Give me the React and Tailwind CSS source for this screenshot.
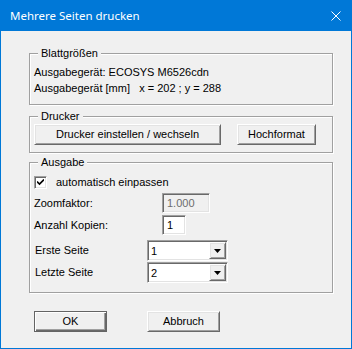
import React from "react";

const raised =
  "border border-t-white border-l-white border-r-[#696969] border-b-[#696969] shadow-[inset_1px_1px_0_#e3e3e3,inset_-1px_-1px_0_#a0a0a0] bg-[#f0f0f0]";
const sunken =
  "border border-t-[#a0a0a0] border-l-[#a0a0a0] border-r-white border-b-white shadow-[inset_1px_1px_0_#696969,inset_-1px_-1px_0_#e3e3e3]";

function Group({ title, className, children }) {
  return (
    <div
      className={
        "relative border border-[#a0a0a0] shadow-[inset_1px_1px_0_#fff,1px_1px_0_#fff] " +
        className
      }
    >
      <span className="absolute left-[8px] top-[-8px] bg-[#f0f0f0] px-[3px] leading-[14px]">
        {title}
      </span>
      {children}
    </div>
  );
}

function Btn({ children, className, def }) {
  return (
    <div
      className={
        "flex items-center justify-center h-[21px] " +
        (def
          ? "border border-[#646464] shadow-[inset_1px_1px_0_#fff,inset_-1px_-1px_0_#696969,inset_-2px_-2px_0_#a0a0a0] bg-[#f0f0f0] "
          : raised + " ") +
        className
      }
    >
      {children}
    </div>
  );
}

function Combo({ value }) {
  return (
    <div className={sunken + " bg-white w-[81px] h-[21px] flex items-center"}>
      <span className="pl-[3px] flex-1 leading-[14px]">{value}</span>
      <div className={raised + " w-[17px] h-[17px] mr-[1px] flex items-center justify-center"}>
        <svg width="7" height="4" viewBox="0 0 7 4">
          <path d="M0 0h7L3.5 4z" fill="#000" />
        </svg>
      </div>
    </div>
  );
}

export default function App() {
  return (
    <div
      className="w-[352px] h-[349px] bg-[#0078d7] px-[1px] pb-[1px] flex flex-col text-[11px] text-black"
      style={{ fontFamily: '"Liberation Sans", Arial, sans-serif' }}
    >
      <div className="h-[31px] flex items-center justify-between pl-[9px] pr-[10px] text-white">
        <span
          className="text-[11.5px]"
          style={{ fontFamily: '"Noto Sans", "Open Sans", sans-serif' }}
        >
          Mehrere Seiten drucken
        </span>
        <svg width="10" height="10" viewBox="0 0 10 10">
          <path d="M0.5 0.5L9.5 9.5M9.5 0.5L0.5 9.5" stroke="#fff" strokeWidth="1" />
        </svg>
      </div>
      <div className="flex-1 bg-[#f0f0f0] pl-[28px] pr-[18px] pt-[22px] flex flex-col">
        <Group title="Blattgrößen" className="h-[52px] pl-[4px] pt-[10px]">
          <div className="leading-[16px]">Ausgabegerät: ECOSYS M6526cdn</div>
          <div className="leading-[16px] whitespace-pre">
            {"Ausgabegerät [mm]   x = 202 ; y = 288"}
          </div>
        </Group>
        <Group title="Drucker" className="mt-[11px] h-[37px] pl-[4px] pt-[7px] flex">
          <Btn className="w-[187px]">Drucker einstellen / wechseln</Btn>
          <Btn className="w-[79px] ml-[16px]">Hochformat</Btn>
        </Group>
        <Group title="Ausgabe" className="mt-[9px] h-[131px] pl-[4px] pt-[13px] flex flex-col">
          <div className="flex items-center h-[13px]">
            <div className={sunken + " bg-white w-[13px] h-[13px] flex items-center justify-center"}>
              <svg width="7" height="7" viewBox="0 0 7 7">
                <path d="M0 2.5L2.5 5L7 0.5" stroke="#000" strokeWidth="1.6" fill="none" />
              </svg>
            </div>
            <span className="ml-[9px]">automatisch einpassen</span>
          </div>
          <div className="flex items-center mt-[4px] h-[20px]">
            <span className="w-[128px]">Zoomfaktor:</span>
            <div className={sunken + " w-[48px] h-[20px] flex items-center pl-[4px] text-[#6d6d6d] bg-[#f0f0f0]"}>
              1.000
            </div>
          </div>
          <div className="flex items-center mt-[2px] h-[20px]">
            <span className="w-[128px]">Anzahl Kopien:</span>
            <div className={sunken + " w-[24px] h-[20px] flex items-center pl-[4px] bg-white"}>1</div>
          </div>
          <div className="flex items-center mt-[5px] h-[21px]">
            <span className="w-[113px] pl-[1px]">Erste Seite</span>
            <Combo value="1" />
          </div>
          <div className="flex items-center mt-[1px] h-[21px]">
            <span className="w-[113px] pl-[1px]">Letzte Seite</span>
            <Combo value="2" />
          </div>
        </Group>
        <div className="flex mt-[18px] pl-[5px]">
          <Btn def className="w-[73px]">OK</Btn>
          <Btn className="w-[73px] ml-[40px]">Abbruch</Btn>
        </div>
      </div>
    </div>
  );
}
